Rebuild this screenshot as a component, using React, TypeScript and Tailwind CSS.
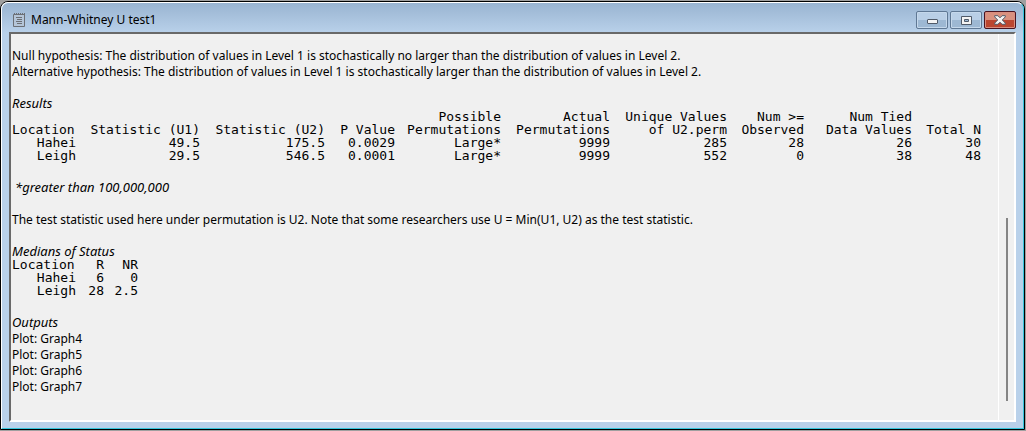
import React from "react";

type Column = { head: string[]; values: string[]; width: string };

const results: Column[] = [
  { head: ["Location"], values: ["Hahei", "Leigh"], width: "w-[64px]" },
  { head: ["Statistic (U1)"], values: ["49.5", "29.5"], width: "w-[124px]" },
  { head: ["Statistic (U2)"], values: ["175.5", "546.5"], width: "w-[125px]" },
  { head: ["P Value"], values: ["0.0029", "0.0001"], width: "w-[70px]" },
  { head: ["Possible", "Permutations"], values: ["Large*", "Large*"], width: "w-[106px]" },
  { head: ["Actual", "Permutations"], values: ["9999", "9999"], width: "w-[109px]" },
  { head: ["Unique Values", "of U2.perm"], values: ["285", "552"], width: "w-[117px]" },
  { head: ["Num >=", "Observed"], values: ["28", "0"], width: "w-[77px]" },
  { head: ["Num Tied", "Data Values"], values: ["26", "38"], width: "w-[108px]" },
  { head: ["Total N"], values: ["30", "48"], width: "w-[69px]" },
];

const medians: Column[] = [
  { head: ["Location"], values: ["Hahei", "Leigh"], width: "w-[64px]" },
  { head: ["R"], values: ["6", "28"], width: "w-[28px]" },
  { head: ["NR"], values: ["0", "2.5"], width: "w-[34px]" },
];

const plots = ["Graph4", "Graph5", "Graph6", "Graph7"];

function DataTable({ columns, label }: { columns: Column[]; label: string }) {
  return (
    <table
      aria-label={label}
      className="table-fixed border-collapse whitespace-nowrap text-right font-['DejaVu_Sans_Mono',monospace] text-[13px] leading-[13px]"
    >
      <thead>
        <tr>
          {columns.map((c, i) => (
            <th
              key={i}
              scope="col"
              className={`${c.width} p-0 align-bottom font-normal ${i === 0 ? "text-left" : "text-right"}`}
            >
              {c.head.map((line) => (
                <div key={line}>{line}</div>
              ))}
            </th>
          ))}
        </tr>
      </thead>
      <tbody>
        {[0, 1].map((r) => (
          <tr key={r}>
            {columns.map((c, i) => (
              <td key={i} className="p-0">
                {c.values[r]}
              </td>
            ))}
          </tr>
        ))}
      </tbody>
    </table>
  );
}

function NotepadIcon() {
  return (
    <svg width="13" height="15" viewBox="0 0 13 15" fill="none" stroke="#6b6f75" aria-hidden="true">
      <path d="M.5 1.5h11v12H.5z" fill="#b4c5d8" />
      <path d="M1.5 0v2M3.5 0v2M5.5 0v2M7.5 0v2M9.5 0v2M11.5 0v2" />
      <path d="M3 4.5h6M4 6.5h5M3 8.5h6M4 10.5h5" />
    </svg>
  );
}

const plainButton =
  "flex h-[18px] w-8 items-center justify-center rounded-[2px] border border-[#5f7894] bg-linear-to-b from-[#b9cfe6] from-50% to-[#9db8d3] to-50% shadow-[inset_0_0_0_1px_#c5d8eb]";

export default function App() {
  return (
    <div className="flex h-screen min-h-[431px] flex-col bg-[#a0a0a0] pt-px pr-px pb-px font-['Noto_Sans',sans-serif] text-black">
      <main className="flex grow flex-col rounded-t-lg border border-black bg-[#b9d1ea]">
        <div className="flex grow flex-col rounded-t-[7px] border border-t-white border-r-[#35c5dc] border-b-[#35c5dc] border-l-white bg-linear-to-b from-[#99b4d1] to-[#b9d1ea] to-[30px] px-[7px] pb-[6px]">
          <header className="flex h-[29px] items-center justify-between pl-1">
            <div className="flex items-center gap-[5px] pt-[5px]">
              <NotepadIcon />
              <h1 className="text-[12px] leading-4">Mann-Whitney U test1</h1>
            </div>
            <div className="flex gap-[2px] pt-[5px]">
              <button type="button" aria-label="Minimize" className={plainButton}>
                <svg width="11" height="5" viewBox="0 0 11 5" className="mt-0.5">
                  <rect x=".5" y=".5" width="10" height="4" rx=".5" fill="#f4f4f4" stroke="#505a68" />
                </svg>
              </button>
              <button type="button" aria-label="Maximize" className={plainButton}>
                <svg width="11" height="9" viewBox="0 0 11 9">
                  <path
                    d="M.5.5h10v8H.5zM3.5 3.5v2h4v-2z"
                    fill="#f4f4f4"
                    fillRule="evenodd"
                    stroke="#505a68"
                  />
                </svg>
              </button>
              <button
                type="button"
                aria-label="Close"
                className="flex h-[18px] w-8 items-center justify-center rounded-[2px] border border-[#4a1420] bg-linear-to-b from-[#d9917f] from-50% to-[#bb4630] to-50% shadow-[inset_0_0_0_1px_#d98e80]"
              >
                <svg width="12" height="10" viewBox="0 0 12 10">
                  <path
                    d="M.7.7h3.2L6 2.8 8.1.7h3.2v1.2L8.3 5l3 3.1v1.2H8.1L6 7.2 3.9 9.3H.7V8.1l3-3.1-3-3.1z"
                    fill="#f4f4f4"
                    stroke="#505a68"
                  />
                </svg>
              </button>
            </div>
          </header>
          <section className="flex grow border-2 border-t-[#696969] border-r-white border-b-white border-l-[#696969] bg-[#f0f0f0]">
            <div className="grow border-r border-white pt-[14px] pl-px text-[12px] leading-4 whitespace-nowrap">
              <p>
                Null hypothesis: The distribution of values in Level 1 is stochastically no larger than the
                distribution of values in Level 2.
              </p>
              <p>
                Alternative hypothesis: The distribution of values in Level 1 is stochastically larger than the
                distribution of values in Level 2.
              </p>
              <h2 className="mt-4 text-[13px] leading-[14px] italic">Results</h2>
              <DataTable columns={results} label="Results" />
              <p className="mt-[17px] pl-[3px] text-[13px] italic">*greater than 100,000,000</p>
              <p className="mt-[17px]">
                The test statistic used here under permutation is U2. Note that some researchers use U = Min(U1,
                U2) as the test statistic.
              </p>
              <h2 className="mt-4 text-[13px] leading-[14px] italic">Medians of Status</h2>
              <DataTable columns={medians} label="Medians of Status" />
              <h2 className="mt-[17px] text-[13px] italic">Outputs</h2>
              <ul className="mt-px">
                {plots.map((p) => (
                  <li key={p}>Plot: {p}</li>
                ))}
              </ul>
            </div>
            <div className="flex w-[15px] flex-col pr-[6px]">
              <div className="grow" />
              <div className="mb-[19px] ml-auto h-[183px] w-[2px] bg-[#858585]" />
            </div>
          </section>
        </div>
      </main>
    </div>
  );
}
